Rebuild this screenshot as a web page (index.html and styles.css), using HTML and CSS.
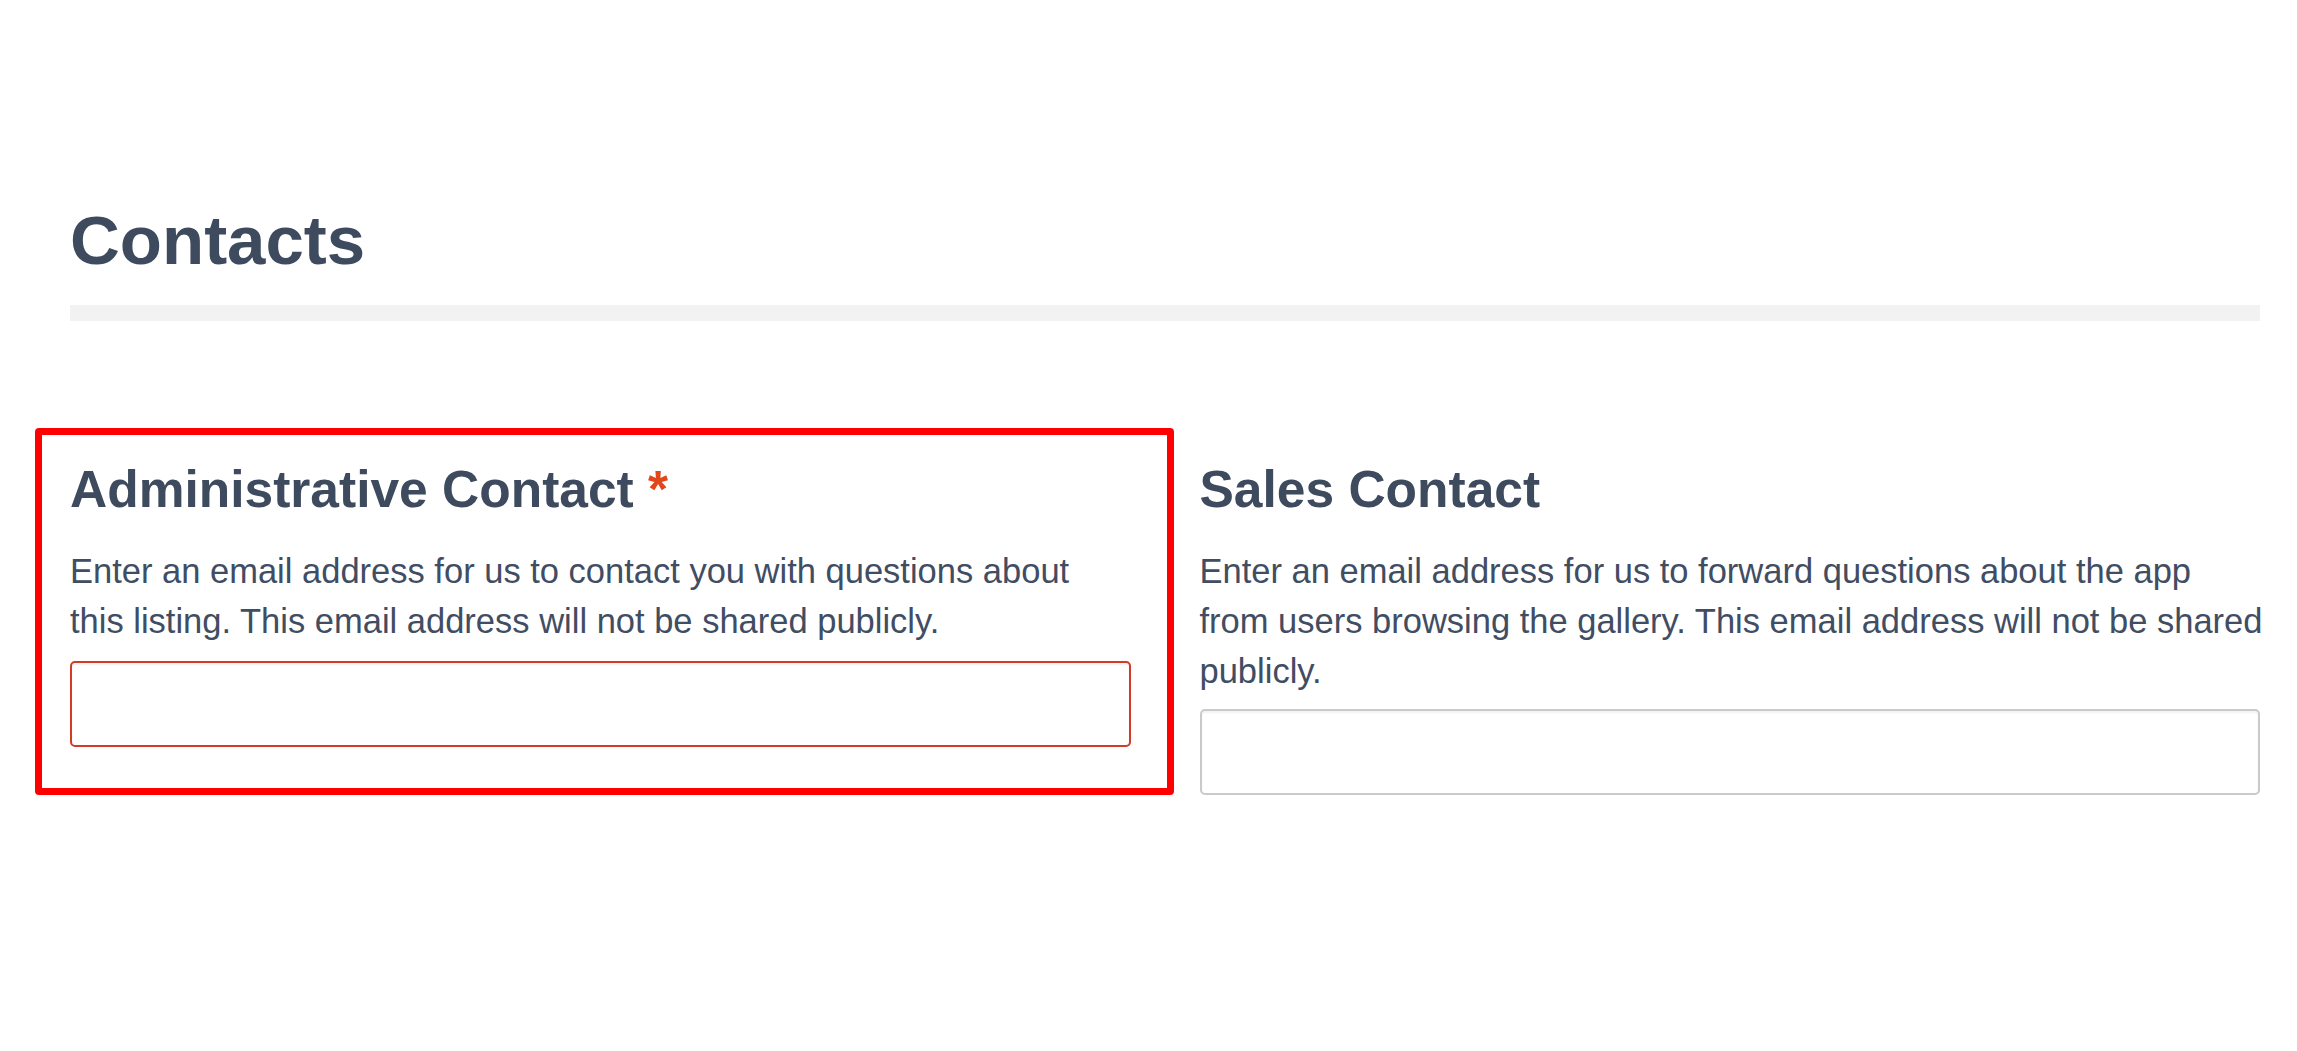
FILE: index.html
```html
<!DOCTYPE html>
<html lang="en">
<head>
<meta charset="utf-8">
<title>Contacts</title>
<link rel="stylesheet" href="styles.css">
</head>
<body>
<main class="page">
  <h1 class="page-title">Contacts</h1>
  <div class="divider"></div>
  <section class="contacts">
    <div class="field field-highlighted">
      <h2 class="field-title">Administrative Contact <span class="required">*</span></h2>
      <p class="field-help field-help-admin">Enter an email address for us to contact you with questions about this listing. This email address will not be shared publicly.</p>
      <input class="field-input field-input-error" type="email" aria-label="Administrative contact email">
      <div class="highlight-box"></div>
    </div>
    <div class="field">
      <h2 class="field-title">Sales Contact</h2>
      <p class="field-help field-help-sales">Enter an email address for us to forward questions about the app from users browsing the gallery. This email address will not be shared publicly.</p>
      <input class="field-input" type="email" aria-label="Sales contact email">
    </div>
  </section>
</main>
</body>
</html>
```
FILE: styles.css
```css
html, body {
  margin: 0;
  padding: 0;
  background: #ffffff;
}

body {
  font-family: "Liberation Sans", Arial, Helvetica, sans-serif;
  color: #3f4b5f;
}

.page {
  padding: 200px 37px 0 70px;
}

.page-title {
  margin: 0;
  font-size: 69px;
  line-height: 82px;
  font-weight: 700;
  color: #3e4a5e;
}

.divider {
  margin-top: 23px;
  height: 16px;
  background: #f2f2f2;
}

.contacts {
  margin-top: 139px;
  display: grid;
  grid-template-columns: 1fr 1fr;
  column-gap: 69px;
  align-items: start;
}

.field {
  position: relative;
  display: flex;
  flex-direction: column;
}

.field-title {
  margin: 0;
  font-size: 51.5px;
  line-height: 58px;
  font-weight: 700;
  color: #3e4a5e;
}

.required {
  color: #e2471c;
}

.field-help {
  margin: 28px 0 0 0;
  font-size: 34.5px;
  line-height: 50px;
  color: #414d63;
}

.field-help-admin {
  max-width: 1040px;
}

.field-help-sales {
  margin-right: -8px;
}

.field-input {
  margin-top: 13px;
  height: 86px;
  box-sizing: border-box;
  width: 100%;
  border: 2px solid #cacaca;
  border-radius: 5px;
  background: #ffffff;
  box-shadow: inset 0 2px 2px rgba(0, 0, 0, 0.05);
  padding: 0 20px;
  font-family: inherit;
  font-size: 30px;
  outline: none;
}

.field-input-error {
  border-color: #d23b27;
  margin-top: 15px;
}

.highlight-box {
  position: absolute;
  left: -35px;
  right: -43px;
  top: -32px;
  bottom: -48px;
  border: 7px solid #ff0000;
  border-radius: 4px;
  pointer-events: none;
}
```
